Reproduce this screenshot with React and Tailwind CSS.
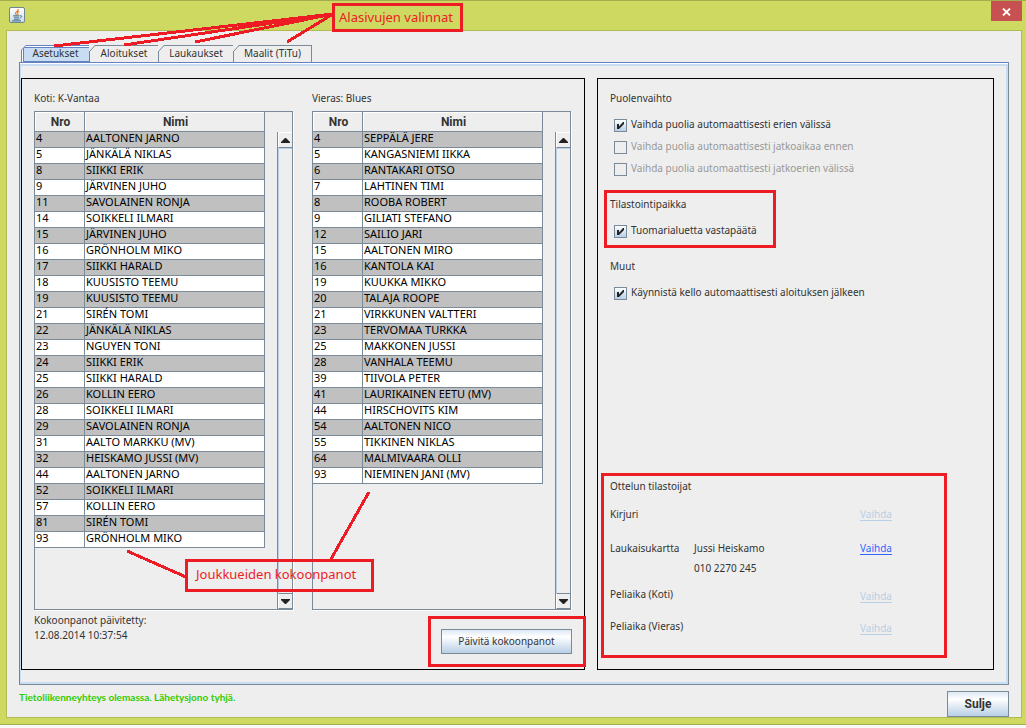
import React from 'react';
import clsx from 'clsx';

const HOME_PLAYERS = [
  [4, 'AALTONEN JARNO'],
  [5, 'JÄNKÄLÄ NIKLAS'],
  [8, 'SIIKKI ERIK'],
  [9, 'JÄRVINEN JUHO'],
  [11, 'SAVOLAINEN RONJA'],
  [14, 'SOIKKELI ILMARI'],
  [15, 'JÄRVINEN JUHO'],
  [16, 'GRÖNHOLM MIKO'],
  [17, 'SIIKKI HARALD'],
  [18, 'KUUSISTO TEEMU'],
  [19, 'KUUSISTO TEEMU'],
  [21, 'SIRÉN TOMI'],
  [22, 'JÄNKÄLÄ NIKLAS'],
  [23, 'NGUYEN TONI'],
  [24, 'SIIKKI ERIK'],
  [25, 'SIIKKI HARALD'],
  [26, 'KOLLIN EERO'],
  [28, 'SOIKKELI ILMARI'],
  [29, 'SAVOLAINEN RONJA'],
  [31, 'AALTO MARKKU (MV)'],
  [32, 'HEISKAMO JUSSI (MV)'],
  [44, 'AALTONEN JARNO'],
  [52, 'SOIKKELI ILMARI'],
  [57, 'KOLLIN EERO'],
  [81, 'SIRÉN TOMI'],
  [93, 'GRÖNHOLM MIKO'],
];

const AWAY_PLAYERS = [
  [4, 'SEPPÄLÄ JERE'],
  [5, 'KANGASNIEMI IIKKA'],
  [6, 'RANTAKARI OTSO'],
  [7, 'LAHTINEN TIMI'],
  [8, 'ROOBA ROBERT'],
  [9, 'GILIATI STEFANO'],
  [12, 'SAILIO JARI'],
  [15, 'AALTONEN MIRO'],
  [16, 'KANTOLA KAI'],
  [19, 'KUUKKA MIKKO'],
  [20, 'TALAJA ROOPE'],
  [21, 'VIRKKUNEN VALTTERI'],
  [23, 'TERVOMAA TURKKA'],
  [25, 'MAKKONEN JUSSI'],
  [28, 'VANHALA TEEMU'],
  [39, 'TIIVOLA PETER'],
  [41, 'LAURIKAINEN EETU (MV)'],
  [44, 'HIRSCHOVITS KIM'],
  [54, 'AALTONEN NICO'],
  [55, 'TIKKINEN NIKLAS'],
  [64, 'MALMIVAARA OLLI'],
  [93, 'NIEMINEN JANI (MV)'],
];

const TABS = [
  { label: 'Asetukset', width: 'w-[69px]' },
  { label: 'Aloitukset', width: 'w-[69px]' },
  { label: 'Laukaukset', width: 'w-[75px]' },
  { label: 'Maalit (TiTu)', width: 'w-[78px]' },
];

function JavaIcon() {
  return (
    <svg className="w-4 h-4" viewBox="0 0 16 16" aria-hidden="true">
      <defs>
        <linearGradient id="java-bg" x1="0" y1="0" x2="0" y2="1">
          <stop offset="0" stopColor="#ffffff" />
          <stop offset="1" stopColor="#cfdbe4" />
        </linearGradient>
      </defs>
      <rect x="0.5" y="0.5" width="15" height="15" rx="1.5" fill="url(#java-bg)" stroke="#6f8793" />
      <path d="M9.2 2C10 4 6 4.800 6.500 6.500C6.700 7.300 7.400 7.700 7.600 8.300M10.200 4.300C8.500 5 8 5.800 8.700 6.600C9.200 7.200 8.900 7.800 8.500 8.300" fill="none" stroke="#e8822e" strokeWidth="1.2" />
      <path d="M4 8.900h6.500M5 10.700h5M4.800 12.300h5.700M3 13.900h9" fill="none" stroke="#4f7f9f" strokeWidth="1.1" />
      <path d="M11 8.800c2.500-.6 2.300 1.900-.3 2.200" fill="none" stroke="#4f7f9f" />
    </svg>
  );
}

function Tab({ label, width, selected, onSelect }) {
  return (
    <button
      type="button"
      role="tab"
      aria-selected={selected}
      onClick={onSelect}
      className={clsx(
        'relative h-[17px] border-t leading-[14px] text-center',
        width,
        selected
          ? 'border-[#6382bf] bg-white pt-px pl-px'
          : 'border-r pb-[2px] border-[#7a8a99] bg-[#eeeeee]',
      )}
    >
      {selected ? (
        <span className="block h-[15px] ml-px pr-[2px] leading-[11px] bg-[#c8ddf2] border border-[#6382bf]">{label}</span>
      ) : (
        label
      )}
      <svg className="absolute -left-px -top-px w-[7px] h-[18px]" viewBox="0 0 7 18" aria-hidden="true">
        <path d="M0 0H6L1 6H0Z" fill="#eeeeee" />
        <path d={selected ? 'M6 0.5L1.500 5V18' : 'M6 0.500L1 6'} fill="none" stroke={selected ? '#6382bf' : '#7a8a99'} />
      </svg>
    </button>
  );
}

function ScrollBar() {
  return (
    <div className="w-[15px] shrink-0 mt-5 flex flex-col border-l border-[#7a8a99]">
      <button type="button" aria-label="Ylös" className="h-4 pr-px flex items-center justify-center border-t border-l border-white border-b border-b-[#7a8a99]">
        <svg className="w-[9px] h-[5px]" viewBox="0 0 9 5" aria-hidden="true"><path d="M4 0h1l4 4v1H0V4z" fill="#222" /></svg>
      </button>
      <div className="flex-1 border-l border-t border-[#b8cfe5]" />
      <button type="button" aria-label="Alas" className="h-4 pr-px flex items-center justify-center border-t border-t-[#7a8a99] border-l border-l-white border-b border-b-[#7a8a99]">
        <svg className="w-[9px] h-[5px]" viewBox="0 0 9 5" aria-hidden="true"><path d="M0 0h9v1L5 5H4L0 1z" fill="#222" /></svg>
      </button>
    </div>
  );
}

function Roster({ title, players }) {
  return (
    <section className="flex flex-col">
      <h2 className="leading-4 mb-[5px]">{title}</h2>
      <div className="flex-1 flex border border-[#7a8a99] shadow-[1px_1px_0_#ffffff]">
        <div className="flex-1 mr-3">
          <table className="w-full table-fixed border-separate border-spacing-0 text-[11px] text-black">
            <thead className="font-['Roboto',sans-serif] text-xs text-[#333333]">
              <tr className="h-5">
                <th className="w-[50px] p-0 pl-[2px] leading-[18px] border-r border-b border-[#7a8a99] shadow-[inset_1px_1px_0_#ffffff]">Nro</th>
                <th className="p-0 pl-[2px] leading-[18px] border-r border-b border-[#7a8a99] shadow-[inset_1px_1px_0_#ffffff]">Nimi</th>
              </tr>
            </thead>
            <tbody>
              {players.map(([number, name]) => (
                <tr key={number} className="h-4 odd:bg-[#c0c0c0] even:bg-white">
                  <td className="p-0 pl-px align-top leading-3 border-r border-b border-[#7a8a99]">{number}</td>
                  <td className="p-0 pl-px align-top leading-3 border-r border-b border-[#7a8a99] whitespace-nowrap">{name}</td>
                </tr>
              ))}
            </tbody>
          </table>
        </div>
        <ScrollBar />
      </div>
    </section>
  );
}

function CheckOption({ label, defaultChecked, disabled }) {
  return (
    <label className={clsx('flex items-center gap-1 h-[22px] pl-1', disabled && 'text-[#999999]')}>
      <span className="grid w-[13px] h-[13px] shrink-0">
        <input
          type="checkbox"
          defaultChecked={defaultChecked}
          disabled={disabled}
          className="peer col-start-1 row-start-1 w-[13px] h-[13px] appearance-none border border-[#7a8a99] bg-linear-to-b from-white to-[#b8cfe5] disabled:bg-none"
        />
        <svg className="col-start-1 row-start-1 w-[13px] h-[13px] pointer-events-none invisible peer-checked:visible" viewBox="0 0 13 13" aria-hidden="true">
          <path d="M3 5h2v2.500L9 3h1v2L5 10H3z" fill="#222" />
        </svg>
      </span>
      <span className="pb-[2px]">{label}</span>
    </label>
  );
}

function OptionGroup({ title, children, marked }) {
  return (
    <section className="relative">
      <h2 className="leading-4 mb-2">{title}</h2>
      {children}
      {marked && (
        <div className="absolute -left-[6px] -top-[6px] -bottom-[6px] w-[172px] border-3 border-[#ed1c24] pointer-events-none" />
      )}
    </section>
  );
}

function ChangeLink({ active }) {
  return (
    <a href="#vaihda" className={clsx('self-end underline underline-offset-2', active ? 'text-[#3366ff]' : 'text-[#b8cfe5]')}>
      Vaihda
    </a>
  );
}

export default function App() {
  const [activeTab, setActiveTab] = React.useState('Asetukset');

  return (
    <div className="min-h-screen flex flex-col pb-[3px] bg-[#f8f8f8] font-['Noto_Sans',sans-serif] text-[10px] leading-4 text-[#333333]">
      <div className="relative flex-1 flex flex-col bg-[#cdd961] border-t border-b border-[#a3ad4d] pb-[6px]">
        <header className="h-[29px] flex items-start justify-between pl-[9px] pr-1">
          <div className="pt-[6px]">
            <JavaIcon />
          </div>
          <button type="button" aria-label="Sulje ikkuna" className="w-[31px] h-5 flex items-center justify-center bg-[#c75050]">
            <svg className="w-[9px] h-[8px] mt-[2px]" viewBox="0 0 9 8" aria-hidden="true">
              <path d="M1 0.500L8 7.500M8 0.500L1 7.500" stroke="#fff" strokeWidth="1.800" />
            </svg>
          </button>
        </header>

        <main className="flex-1 flex flex-col ml-[6px] mr-1 px-3 pt-[14px] bg-[#eeeeee] border border-[#b0bb52]">
          <div role="tablist" className="flex pl-[2px]">
            {TABS.map((tab) => (
              <Tab
                key={tab.label}
                label={tab.label}
                width={tab.width}
                selected={tab.label === activeTab}
                onSelect={() => setActiveTab(tab.label)}
              />
            ))}
          </div>

          <div className="flex-1 flex flex-col border border-t-[#6382bf] border-l-[#6382bf] border-r-[#7a8a99] border-b-[#7a8a99] bg-white pt-px">
            <div className="flex-1 grid grid-cols-[564fr_397fr] gap-3 pt-3 pr-3 pb-3 border-2 border-l border-[#c8ddf2] bg-[#eeeeee]">
              <div className="relative flex flex-col border border-black px-3 pt-[11px]">
                <div className="flex-1 grid grid-cols-2 gap-[19px] pr-px">
                  <Roster title="Koti: K-Vantaa" players={HOME_PLAYERS} />
                  <Roster title="Vieras: Blues" players={AWAY_PLAYERS} />
                </div>
                <div className="flex justify-between items-start">
                  <div className="pt-[3px] leading-[15px]">
                    <p>Kokoonpanot päivitetty:</p>
                    <p>12.08.2014 10:37:54</p>
                  </div>
                  <div className="relative mt-[19px] mb-[15px]">
                    <button type="button" className="block w-[131px] h-[25px] pb-[2px] border border-[#7a8a99] bg-linear-to-b from-[#dde8f3] via-white via-30% to-[#b8cfe5]">
                      Päivitä kokoonpanot
                    </button>
                    <div className="absolute -left-[13px] -right-[14px] -top-[13px] -bottom-[13px] border-3 border-[#ed1c24] pointer-events-none" />
                  </div>
                </div>

                <div className="absolute left-[100px] bottom-[77px] w-[252px] h-[101px] flex items-end justify-end pointer-events-none text-[#ed1c24]">
                  <svg className="absolute inset-0 w-full h-full" viewBox="0 0 252 101" shapeRendering="crispEdges" aria-hidden="true">
                    <path d="M5 60L64 86M247 1L209 68" stroke="#ed1c24" strokeWidth="3" />
                  </svg>
                  <div className="w-[189px] h-[33px] pl-2 border-3 border-[#ed1c24] text-[13px] leading-6">
                    Joukkueiden kokoonpanot
                  </div>
                </div>
              </div>

              <div className="flex flex-col justify-between border border-black px-3 pt-[11px] pb-[33px]">
                <div className="flex flex-col gap-4">
                  <OptionGroup title="Puolenvaihto">
                    <CheckOption label="Vaihda puolia automaattisesti erien välissä" defaultChecked />
                    <CheckOption label="Vaihda puolia automaattisesti jatkoaikaa ennen" disabled />
                    <CheckOption label="Vaihda puolia automaattisesti jatkoerien välissä" disabled />
                  </OptionGroup>
                  <OptionGroup title="Tilastointipaikka" marked>
                    <CheckOption label="Tuomarialuetta vastapäätä" defaultChecked />
                  </OptionGroup>
                  <OptionGroup title="Muut">
                    <CheckOption label="Käynnistä kello automaattisesti aloituksen jälkeen" defaultChecked />
                  </OptionGroup>
                </div>

                <section className="relative">
                  <h2 className="mb-3">Ottelun tilastoijat</h2>
                  <div className="grid grid-cols-[84px_166px_1fr] mb-[18px]">
                    <span>Kirjuri</span>
                    <span />
                    <ChangeLink />
                  </div>
                  <div className="grid grid-cols-[84px_166px_1fr] gap-y-1 mb-[10px]">
                    <span>Laukaisukartta</span>
                    <span>Jussi Heiskamo</span>
                    <ChangeLink active />
                    <span className="col-start-2">010 2270 245</span>
                  </div>
                  <div className="grid grid-cols-[84px_166px_1fr] h-[18px] mb-[14px]">
                    <span>Peliaika (Koti)</span>
                    <span />
                    <ChangeLink />
                  </div>
                  <div className="grid grid-cols-[84px_166px_1fr] h-[18px]">
                    <span>Peliaika (Vieras)</span>
                    <span />
                    <ChangeLink />
                  </div>
                  <div className="absolute -left-[9px] right-[34px] -top-[5px] -bottom-[22px] border-3 border-[#ed1c24] pointer-events-none" />
                </section>
              </div>
            </div>
          </div>

          <footer className="flex justify-between items-start pt-[6px]">
            <p className="font-['Lato',sans-serif] font-bold leading-3 text-[#33cc00]">Tietoliikenneyhteys olemassa. Lähetysjono tyhjä.</p>
            <button type="button" className="w-[62px] h-[26px] border border-[#7a8a99] bg-linear-to-b from-[#dde8f3] via-white via-30% to-[#b8cfe5] font-['Roboto',sans-serif] text-xs font-bold">
              Sulje
            </button>
          </footer>
        </main>

        <svg className="absolute left-0 -top-px w-[340px] h-[50px] pointer-events-none" viewBox="0 0 340 50" shapeRendering="crispEdges" aria-hidden="true">
          <path d="M333 14L54 46M333 14L124 45M333 14L195 42M333 14L287 42" stroke="#ed1c24" strokeWidth="3" />
        </svg>
        <div className="absolute left-[332px] top-[2px] w-[131px] h-[29px] pl-1 border-3 border-[#ed1c24] text-[13px] leading-[22px] text-[#ed1c24] pointer-events-none">
          Alasivujen valinnat
        </div>
      </div>
    </div>
  );
}
